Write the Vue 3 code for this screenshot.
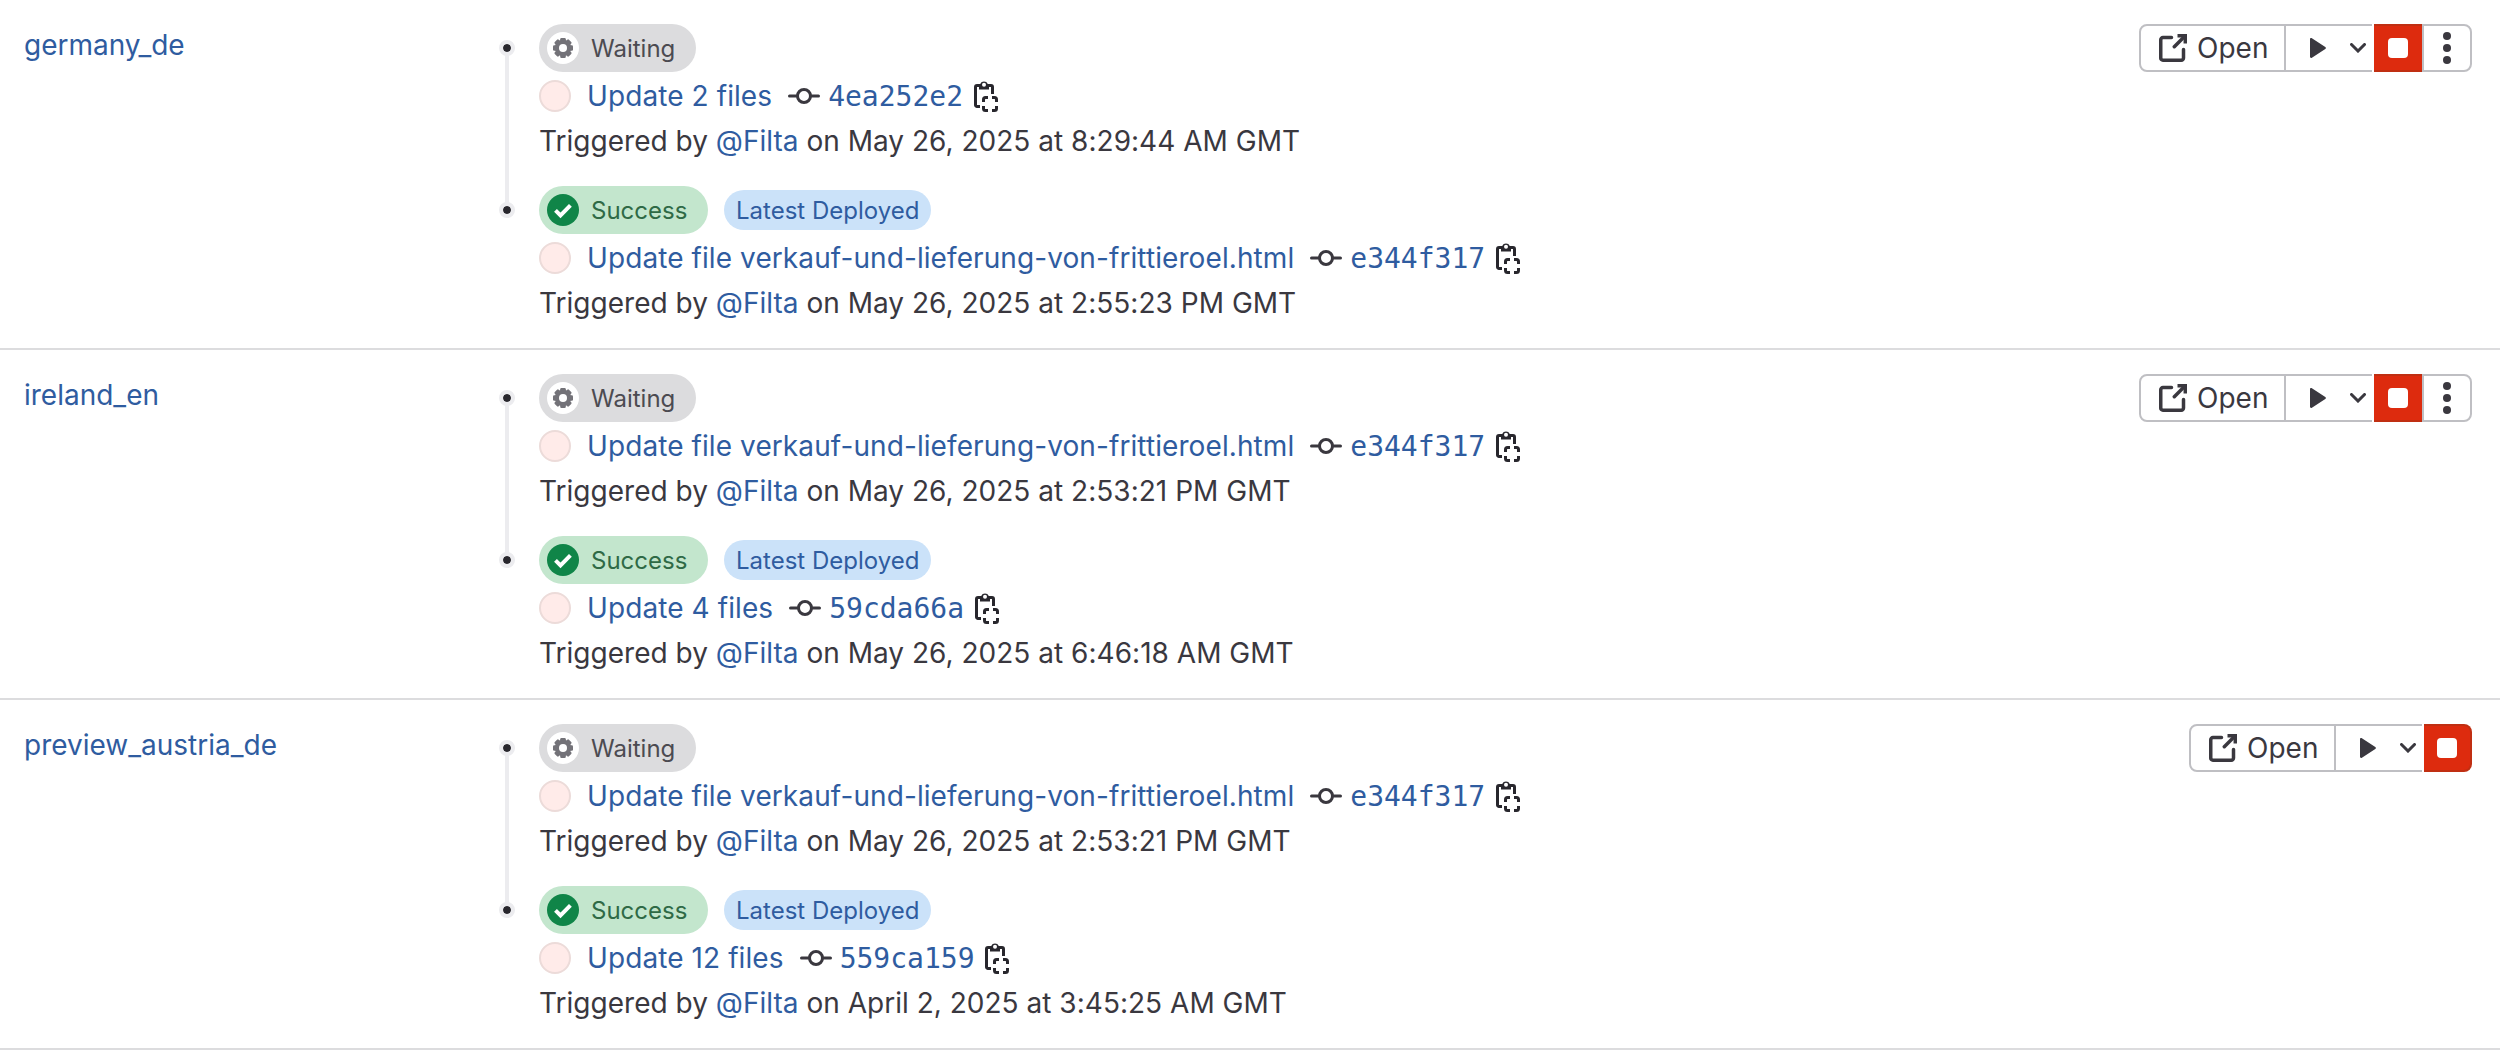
<script setup>
const latest = 'Update file verkauf-und-lieferung-von-frittieroel.html'
const environments = [
  {
    name: 'germany_de',
    menu: true,
    deployments: [
      { success: false, title: 'Update 2 files', sha: '4ea252e2', date: 'May 26, 2025 at 8:29:44 AM GMT' },
      { success: true, title: latest, sha: 'e344f317', date: 'May 26, 2025 at 2:55:23 PM GMT' },
    ],
  },
  {
    name: 'ireland_en',
    menu: true,
    deployments: [
      { success: false, title: latest, sha: 'e344f317', date: 'May 26, 2025 at 2:53:21 PM GMT' },
      { success: true, title: 'Update 4 files', sha: '59cda66a', date: 'May 26, 2025 at 6:46:18 AM GMT' },
    ],
  },
  {
    name: 'preview_austria_de',
    menu: false,
    deployments: [
      { success: false, title: latest, sha: 'e344f317', date: 'May 26, 2025 at 2:53:21 PM GMT' },
      { success: true, title: 'Update 12 files', sha: '559ca159', date: 'April 2, 2025 at 3:45:25 AM GMT' },
    ],
  },
]
</script>

<template>
  <main class="environments">
    <section v-for="env in environments" :key="env.name" class="row">
      <a class="name">{{ env.name }}</a>
      <ul class="timeline">
        <li v-for="d in env.deployments" :key="d.date" class="deployment">
          <span class="track"><i class="dot"></i></span>
          <div class="details">
            <div class="badges">
              <span class="status" :class="{ success: d.success }">
                <svg v-if="d.success" class="status-icon" viewBox="0 0 32 32">
                  <circle cx="16" cy="16" r="16" fill="#108548" />
                  <path d="M8.500 16.300l5 5L23.400 11.400" fill="none" stroke="#fff" stroke-width="4" />
                </svg>
                <svg v-else class="status-icon" viewBox="0 0 32 32">
                  <circle cx="16" cy="16" r="16" fill="#fff" />
                  <g fill="#737278">
                    <circle cx="16" cy="16" r="8.200" />
                    <rect v-for="a in [0, 45, 90, 135]" :key="a" x="13.200" y="6" width="5.600" height="20" rx="1.200" :transform="`rotate(${a} 16 16)`" />
                  </g>
                  <circle cx="16" cy="16" r="4" fill="#fff" />
                </svg>
                <span class="label">{{ d.success ? 'Success' : 'Waiting' }}</span>
              </span>
              <span v-if="d.success" class="latest">Latest Deployed</span>
            </div>
            <div class="commit">
              <span class="avatar"></span>
              <a class="title">{{ d.title }}</a>
              <svg class="commit-icon" viewBox="0 0 32 32" fill="none" stroke="#3a383f" stroke-width="3">
                <circle cx="16" cy="16" r="6.500" />
                <path d="M1.500 16h8M22.500 16h8" stroke-linecap="round" />
              </svg>
              <a class="sha">{{ d.sha }}</a>
              <svg class="copy-icon" viewBox="0 0 24 32" fill="none" stroke="#28272d" stroke-width="3">
                <path d="M6 26.500H3a1.500 1.500 0 0 1-1.500-1.500V7A1.500 1.500 0 0 1 3 5.500h14a1.500 1.500 0 0 1 1.500 1.500v7" />
                <path d="M5 4h1.200a4.200 4.200 0 0 1 7.600 0H15v5.500H5z" fill="#28272d" stroke="none" />
                <circle cx="10" cy="4.800" r="2" fill="#fff" stroke="none" />
                <path d="M9.500 22v-2.500a2 2 0 0 1 2-2H14M18 17.500H20.500a2 2 0 0 1 2 2V22M22.500 26V28.500a2 2 0 0 1-2 2H18M14 30.500h-2.500a2 2 0 0 1-2-2V26" />
              </svg>
            </div>
            <p class="trigger">Triggered by <a>@Filta</a> on {{ d.date }}</p>
          </div>
        </li>
      </ul>
      <div class="actions">
        <button class="open">
          <svg width="28" height="28" viewBox="0 0 28 28" fill="none" stroke="#3a383f" stroke-width="3.500">
            <path d="M12.500 3.500H4A2.200 2.200 0 0 0 1.750 5.700V24A2.200 2.200 0 0 0 4 26.250H22.300A2.200 2.200 0 0 0 24.500 24V15.500" stroke-linecap="round" />
            <path d="M18.500 1.700H26.300V9.500" />
            <path d="M26 2L15.300 12.700" stroke-linecap="round" />
          </svg>
          Open
        </button>
        <button class="play">
          <svg width="16" height="20" viewBox="0 0 16 20"><path d="M0 1.200C0 .2 1 -.3 1.900 .3L15.300 9q1.200 1 0 2L1.900 19.700C1 20.300 0 19.800 0 18.800z" fill="#3a383f" /></svg>
          <svg width="16" height="10" viewBox="0 0 16 10" fill="none" stroke="#3a383f" stroke-width="3" stroke-linecap="round"><path d="M1.500 1.500L8 8l6.500-6.500" /></svg>
        </button>
        <button class="stop"><span></span></button>
        <button v-if="env.menu" class="menu"><i></i><i></i><i></i></button>
      </div>
    </section>
  </main>
</template>

<style>
body {
  background: #fff;
}
</style>

<style scoped>
.environments {
  font: 28px/40px Inter, sans-serif;
  color: #3a383f;
}
.row {
  display: flex;
  box-sizing: border-box;
  height: 350px;
  padding: 24px 28px 0 24px;
  border-bottom: 2px solid #dcdcde;
}
a {
  color: #2f5ca0;
}
.name {
  width: 475px;
  padding-top: 1px;
}
.timeline {
  list-style: none;
  margin: 0;
  padding: 0;
  flex: 1;
}
.deployment {
  display: flex;
  height: 162px;
}
.track {
  width: 16px;
  margin-right: 24px;
  padding-top: 16px;
  box-sizing: border-box;
}
.deployment:first-child .track {
  background: linear-gradient(#ececef, #ececef) 6px 24px / 4px 100% no-repeat;
}
.deployment:last-child .track {
  background: linear-gradient(#ececef, #ececef) 6px 0 / 4px 24px no-repeat;
}
.dot {
  display: block;
  width: 8px;
  height: 8px;
  border: 4px solid #ececef;
  border-radius: 50%;
  background: #28272d;
  background-clip: padding-box;
}
.badges {
  display: flex;
  align-items: center;
  gap: 16px;
  height: 48px;
  font-size: 24px;
  white-space: nowrap;
}
.status {
  display: flex;
  align-items: center;
  box-sizing: border-box;
  width: 157px;
  height: 48px;
  padding-left: 8px;
  border-radius: 24px;
  background: #dcdcde;
  color: #4c4b51;
}
.status.success {
  width: 169px;
  background: #c3e6cd;
  color: #2f6a46;
}
.status-icon {
  width: 32px;
  height: 32px;
  margin-right: 12px;
}
.label {
  padding-top: 2px;
}
.latest {
  box-sizing: border-box;
  width: 207px;
  height: 40px;
  padding-left: 12px;
  border-radius: 20px;
  background: #cbe2f9;
  color: #2f5ca0;
  line-height: 42px;
}
.commit {
  display: flex;
  align-items: center;
  height: 32px;
  margin-top: 8px;
  white-space: nowrap;
}
.avatar {
  box-sizing: border-box;
  width: 32px;
  height: 32px;
  margin-right: 16px;
  border: 2px solid #ecdbd9;
  border-radius: 50%;
  background: #ffebe9;
}
.title {
  letter-spacing: 0.088px;
}
.commit-icon {
  width: 32px;
  height: 32px;
  margin: 0 8px 0 16px;
}
.sha {
  padding-top: 2px;
  font: 28px/32px "DejaVu Sans Mono", monospace;
}
.copy-icon {
  width: 24px;
  height: 32px;
  margin-left: 11px;
}
.trigger {
  margin: 9px 0 0;
  white-space: nowrap;
  letter-spacing: 0.02px;
}
.actions {
  display: flex;
  height: 48px;
}
button {
  display: flex;
  align-items: center;
  box-sizing: border-box;
  height: 48px;
  margin: 0;
  padding: 0;
  border: 2px solid #bfbfc3;
  background: #fff;
  color: inherit;
  font: inherit;
}
.open {
  width: 147px;
  padding-left: 18px;
  gap: 10px;
  border-radius: 8px 0 0 8px;
}
.play {
  width: 86px;
  padding-left: 24px;
  gap: 24px;
  border-width: 2px 0;
}
.stop {
  width: 48px;
  margin-left: 2px;
  justify-content: center;
  border-color: #c02f12;
  border-width: 2px 0;
  background: #dd2b0e;
}
.stop:last-child {
  border-right-width: 2px;
  border-radius: 0 8px 8px 0;
}
.stop span {
  width: 20px;
  height: 20px;
  border-radius: 4px;
  background: #fff;
}
.menu {
  width: 50px;
  flex-direction: column;
  justify-content: center;
  gap: 4px;
  border-radius: 0 8px 8px 0;
}
.menu i {
  width: 8px;
  height: 8px;
  border-radius: 50%;
  background: #3a383f;
}
</style>
